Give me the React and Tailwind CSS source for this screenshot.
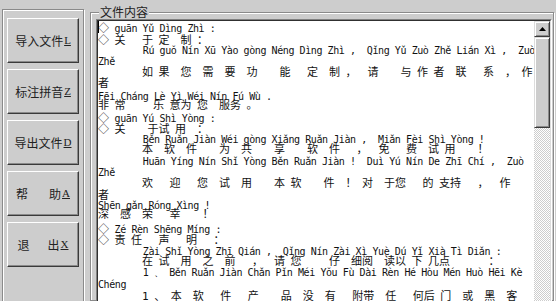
// hanzi rows are laid out with plain spaces: 5.5px each (mono space + word-spacing), 11px per hanzi
function spread(cells, start) {
  let s = "";
  let cur = start;
  for (const [x, ch] of cells) {
    const n = Math.max(0, Math.round((x - cur) / 5.5));
    s += " ".repeat(n) + ch;
    cur += n * 5.5 + (ch.charCodeAt(0) < 128 ? 6.6 : 11);
  }
  return s;
}

const lines = [
  { h: 12, py: " guān Yǔ Dìng Zhì :", dia: true, caret: true },
  { h: 12, dia: true, hz: [[115, "关"], [143, "于"], [157, "定"], [180, "制"], [195, "："]] },
  { h: 11, py: "        Rú guǒ Nín Xū Yào gòng Néng Dìng Zhì ,  Qǐng Yǔ Zuò Zhě Lián Xì ,  Zuò" },
  { h: 11, py: "Zhě" },
  { h: 11, hz: [[143, "如"], [160, "果"], [182, "您"], [205, "需"], [225, "要"], [248, "功"], [278, "能"], [305, "定"], [328, "制"], [348, "，"], [367, "请"], [400, "与"], [417, "作"], [435, "者"], [453, "联"], [485, "系"], [503, "，"], [521, "作"]] },
  { h: 13, hz: [[98, "者"]] },
  { h: 9, py: "Fēi Cháng Lè Yì Wéi Nín Fú Wù ." },
  { h: 11, hz: [[99, "非"], [117, "常"], [154, "乐"], [167, "意"], [181, "为"], [199, "您"], [217, "服"], [231, "务"], [245, "。"]] },
  { h: 11, py: " guān Yú Shì Yòng :", dia: true },
  { h: 12, dia: true, hz: [[115, "关"], [145, "于"], [158, "试"], [175, "用"], [196, "："]] },
  { h: 10, py: "        Běn Ruǎn Jiàn Wéi gòng Xiǎng Ruǎn Jiàn ,  Miǎn Fèi Shì Yòng !" },
  { h: 12, hz: [[143, "本"], [165, "软"], [188, "件"], [218, "为"], [242, "共"], [273, "享"], [308, "软"], [327, "件"], [358, "，"], [378, "免"], [407, "费"], [427, "试"], [443, "用"], [476, "！"]] },
  { h: 11, py: "        Huān Yíng Nín Shǐ Yòng Běn Ruǎn Jiàn !  Duì Yú Nín De Zhī Chí ,  Zuò" },
  { h: 11, py: "Zhě" },
  { h: 12, hz: [[144, "欢"], [170, "迎"], [198, "您"], [220, "试"], [243, "用"], [272, "本"], [292, "软"], [322, "件"], [346, "！"], [362, "对"], [382, "于"], [397, "您"], [420, "的"], [437, "支"], [452, "持"], [478, "，"], [500, "作"]] },
  { h: 10, hz: [[98, "者"]] },
  { h: 9, py: "Shēn gǎn Róng Xìng !" },
  { h: 13, hz: [[99, "深"], [121, "感"], [144, "荣"], [171, "幸"], [203, "！"]] },
  { h: 11, py: " Zé Rèn Shēng Míng :", dia: true },
  { h: 13, dia: true, hz: [[115, "责"], [130, "任"], [157, "声"], [187, "明"], [213, "："]] },
  { h: 10, py: "        Zài Shǐ Yòng Zhī Qián ,  Qǐng Nín Zài Xì Yuè Dú Yǐ Xià Tì Diǎn :" },
  { h: 11, hz: [[144, "在"], [158, "试"], [178, "用"], [200, "之"], [222, "前"], [250, "，"], [272, "请"], [288, "您"], [327, "仔"], [350, "细"], [363, "阅"], [385, "读"], [397, "以"], [409, "下"], [427, "几"], [439, "点"], [486, "："]] },
  { h: 12, py: "        1 、 Běn Ruǎn Jiàn Chǎn Pǐn Méi Yǒu Fù Dài Rèn Hé Hòu Mén Huò Hēi Kè" },
  { h: 12, py: "Chéng" },
  { h: 12, hz: [[144, "1"], [153, "、"], [172, "本"], [192, "软"], [218, "件"], [248, "产"], [278, "品"], [302, "没"], [325, "有"], [350, "附"], [363, "带"], [387, "任"], [410, "何"], [422, "后"], [440, "门"], [460, "或"], [483, "黑"], [507, "客"]] },
];

const Key = ({ children }) => (
  <span className="ml-px font-['Liberation_Serif',serif] text-[11px] underline">{children}</span>
);

const Btn = ({ children }) => (
  <button className="flex h-[45px] w-full items-center justify-center border border-t-white border-l-white border-r-[#3a3a3a] border-b-[#3a3a3a] bg-[#cdcdcd] font-['Noto_Sans_CJK_SC',sans-serif] text-[12px] leading-none text-[#222] shadow-[inset_-1px_-1px_0_#8a8a8a]">
    {children}
  </button>
);

const Dia = () => (
  <span className="font-['Noto_Sans_CJK_SC',sans-serif] text-[11px] leading-[12px] tracking-normal">◇</span>
);

const raised =
  "border border-t-[#dcdcdc] border-l-[#dcdcdc] border-r-[#3a3a3a] border-b-[#3a3a3a] bg-[#cdcdcd] shadow-[inset_1px_1px_0_#fff,inset_-1px_-1px_0_#8a8a8a]";

export default function App() {
  return (
    <div className="flex h-[301px] w-[556px] overflow-hidden bg-[#cdcdcd] text-black">
      <aside className="ml-[2px] mt-[9px] h-[320px] w-[82px] shrink-0 border border-[#8a8a8a] shadow-[inset_1px_1px_0_#fff,1px_1px_0_#fff]">
        <div className="flex flex-col gap-[6px] px-[4px] pt-[8px]">
          <Btn>导入文件<Key>L</Key></Btn>
          <Btn>标注拼音<Key>Z</Key></Btn>
          <Btn>导出文件<Key>D</Key></Btn>
          <Btn>
            <span className="mr-[21px]">帮</span>助<Key>A</Key>
          </Btn>
          <Btn>
            <span className="mr-[18px]">退</span>出<Key>X</Key>
          </Btn>
        </div>
      </aside>

      <fieldset className="ml-[6px] mr-[2px] mt-[5px] min-w-0 flex-1 border border-[#8a8a8a] pl-[5px] pr-[1px] shadow-[inset_1px_1px_0_#fff,1px_1px_0_#fff]">
        <legend className="ml-[3px] bg-[#cdcdcd] px-px font-['Noto_Sans_CJK_SC',sans-serif] text-[12px] leading-[14px] text-[#222]">
          文件内容
        </legend>
        <div className="flex h-[300px] border border-t-[#808080] border-l-[#808080] border-r-white border-b-white">
          <div className="flex min-w-0 flex-1 border border-t-[#303030] border-l-[#303030] border-r-[#dcdcdc] border-b-[#dcdcdc] bg-white">
            <div className="min-w-0 flex-1 overflow-hidden text-[#111]">
              {lines.map((l, i) =>
                l.hz ? (
                  <div
                    key={i}
                    style={{ height: l.h }}
                    className="whitespace-pre font-['DejaVu_Sans_Mono','Noto_Sans_CJK_SC',monospace] text-[11px] leading-[12px] [word-spacing:-1.12px]"
                  >
                    {l.dia && <Dia />}
                    {spread(l.hz, l.dia ? 109 : 98)}
                  </div>
                ) : (
                  <div
                    key={i}
                    style={{ height: l.h }}
                    className="whitespace-pre font-['DejaVu_Sans_Mono','Liberation_Mono',monospace] text-[10px] leading-[12px] tracking-[-0.42px]"
                  >
                    {l.caret && <span className="-mr-px inline-block h-[12px] w-px bg-black align-top" />}
                    {l.dia && <Dia />}
                    {l.py}
                  </div>
                )
              )}
            </div>

            <div className="flex w-[16px] shrink-0 flex-col">
              <div className={`flex h-[16px] items-center justify-center ${raised}`}>
                <svg width="7" height="4" viewBox="0 0 7 4">
                  <path d="M3.5 0 L7 4 L0 4 Z" fill="#000" />
                </svg>
              </div>
              <div className={`h-[91px] ${raised}`} />
              <div className="flex-1 bg-[repeating-conic-gradient(#ffffff_0_25%,#cdcdcd_0_50%)] bg-[length:2px_2px]" />
            </div>
          </div>
        </div>
      </fieldset>
    </div>
  );
}
